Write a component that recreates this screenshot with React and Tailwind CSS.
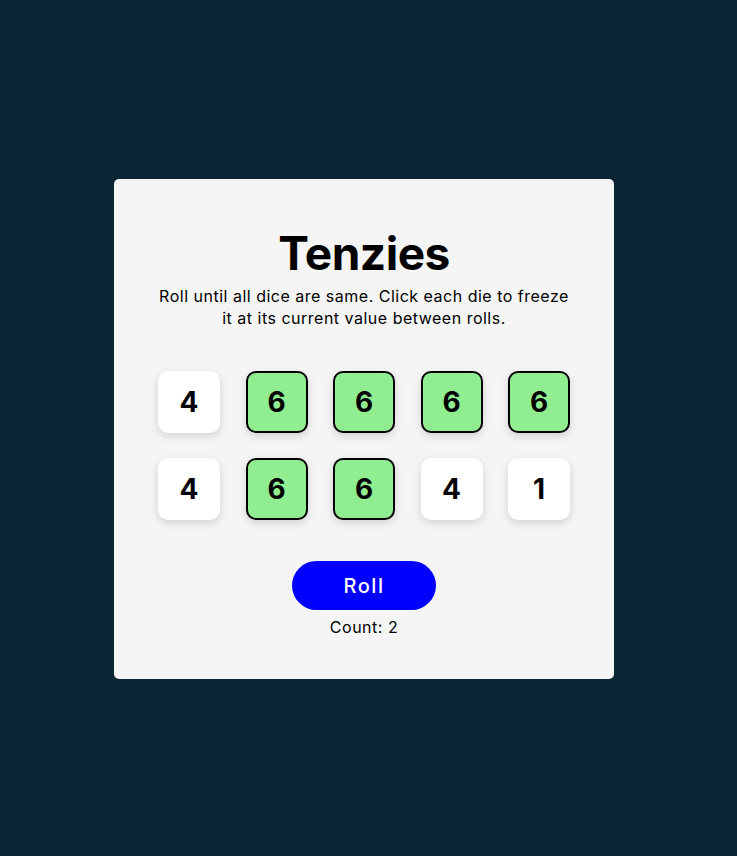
const dice = [
  { v: 4, held: false },
  { v: 6, held: true },
  { v: 6, held: true },
  { v: 6, held: true },
  { v: 6, held: true },
  { v: 4, held: false },
  { v: 6, held: true },
  { v: 6, held: true },
  { v: 4, held: false },
  { v: 1, held: false },
];

export default function App() {
  return (
    <div
      className="min-h-[856px] w-full bg-[#0b2434] flex items-center justify-center pr-[9px] pt-[2px]"
      style={{ fontFamily: "Inter, 'Noto Sans', sans-serif" }}
    >
      <div className="w-[500px] h-[500px] bg-[#f5f5f5] rounded-[5px] flex flex-col items-center pt-[44px]">
        <h1 className="text-[46px] leading-[60px] font-bold text-black tracking-[-0.5px]">Tenzies</h1>
        <p className="mt-[2px] w-[414px] text-center text-[16px] leading-[22px] tracking-[0.5px] text-black">
          Roll until all dice are same. Click each die to freeze it at its current value between rolls.
        </p>
        <div className="mt-[42px] grid grid-cols-5 gap-x-[25.5px] gap-y-[25px]">
          {dice.map((d, i) => (
            <button
              key={i}
              className={
                "w-[62px] h-[62px] rounded-[10px] flex items-center justify-center text-[28px] font-bold text-black shadow-[0_3px_8px_rgba(0,0,0,0.15)] " +
                (d.held ? "bg-[#90ee90] border-2 border-black" : "bg-white")
              }
            >
              {d.v}
            </button>
          ))}
        </div>
        <button className="mt-[41px] w-[144px] h-[49px] rounded-full bg-[#0000ff] text-white text-[20px] tracking-[1.5px] font-medium">
          Roll
        </button>
        <div className="mt-[6px] text-[16px] leading-[22px] tracking-[0.5px] text-black">Count: 2</div>
      </div>
    </div>
  );
}
